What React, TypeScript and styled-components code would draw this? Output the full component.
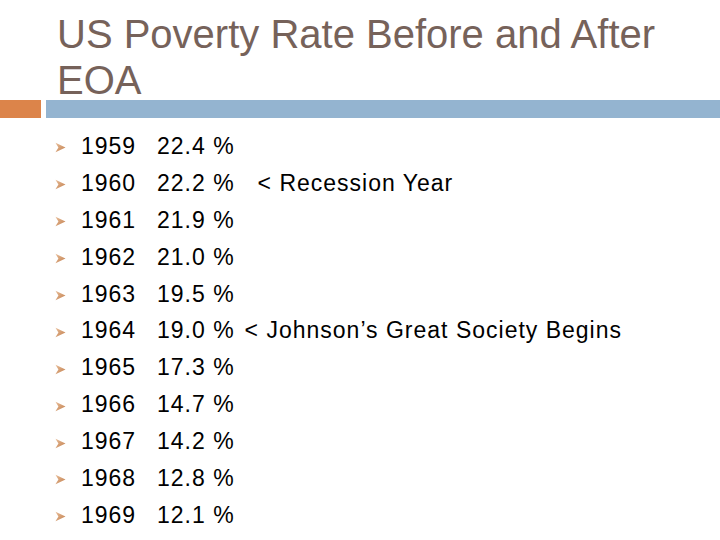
import styled, { createGlobalStyle } from "styled-components";

const GlobalStyle = createGlobalStyle`
  html, body {
    margin: 0;
    padding: 0;
    background: #ffffff;
  }
  body {
    font-family: "Liberation Sans", Arial, sans-serif;
  }
`;

const Slide = styled.div`
  width: 720px;
  height: 540px;
  overflow: hidden;
  display: flex;
  flex-direction: column;
`;

const Title = styled.h1`
  margin: 0;
  padding: 11px 40px 0 57px;
  font-size: 40px;
  font-weight: normal;
  line-height: 46px;
  color: #76625a;
`;

const RuleRow = styled.div`
  display: flex;
  gap: 5px;
  height: 18px;
  margin-top: -3px;
`;

const RuleBar = styled.div<{ $color: string; $width?: string }>`
  background: ${(p) => p.$color};
  width: ${(p) => p.$width ?? "auto"};
  flex: ${(p) => (p.$width ? "none" : "1")};
`;

const List = styled.ul`
  list-style: none;
  margin: 10px 0 0;
  padding: 0 0 0 55px;
`;

const Item = styled.li`
  display: flex;
  align-items: center;
  height: 36.9px;
  font-size: 23px;
  letter-spacing: 1px;
  color: #000;
  white-space: pre;
`;

const BulletBox = styled.span`
  width: 26px;
  flex: none;
  display: flex;
  align-items: center;
  padding-top: 3px;
`;

const Year = styled.span`
  width: 76px;
  flex: none;
`;

const Note = styled.span<{ $gap: number }>`
  margin-left: ${(p) => p.$gap}px;
`;

const Bullet = () => (
  <BulletBox>
    <svg width="11" height="11" viewBox="0 0 11 11">
      <defs>
        <linearGradient id="bg" x1="0" y1="0" x2="1" y2="1">
          <stop offset="0" stopColor="#e8bd98" />
          <stop offset="1" stopColor="#c27f4e" />
        </linearGradient>
      </defs>
      <path d="M0.5 0.8 L10.5 5.5 L0.5 10.2 L3.4 5.5 Z" fill="url(#bg)" />
    </svg>
  </BulletBox>
);

const rows: { year: string; value: string; note?: string; gap?: number }[] = [
  { year: "1959", value: "22.4 %" },
  { year: "1960", value: "22.2 %", note: "< Recession Year", gap: 23 },
  { year: "1961", value: "21.9 %" },
  { year: "1962", value: "21.0 %" },
  { year: "1963", value: "19.5 %" },
  { year: "1964", value: "19.0 %", note: "< Johnson’s Great Society Begins", gap: 10 },
  { year: "1965", value: "17.3 %" },
  { year: "1966", value: "14.7 %" },
  { year: "1967", value: "14.2 %" },
  { year: "1968", value: "12.8 %" },
  { year: "1969", value: "12.1 %" },
];

export default function App() {
  return (
    <>
      <GlobalStyle />
      <Slide>
        <Title>US Poverty Rate Before and After EOA</Title>
        <RuleRow>
          <RuleBar $color="#dc844a" $width="41px" />
          <RuleBar $color="#94b4d0" />
        </RuleRow>
        <List>
          {rows.map((r) => (
            <Item key={r.year}>
              <Bullet />
              <Year>{r.year}</Year>
              <span>{r.value}</span>
              {r.note && <Note $gap={r.gap ?? 0}>{r.note}</Note>}
            </Item>
          ))}
        </List>
      </Slide>
    </>
  );
}
